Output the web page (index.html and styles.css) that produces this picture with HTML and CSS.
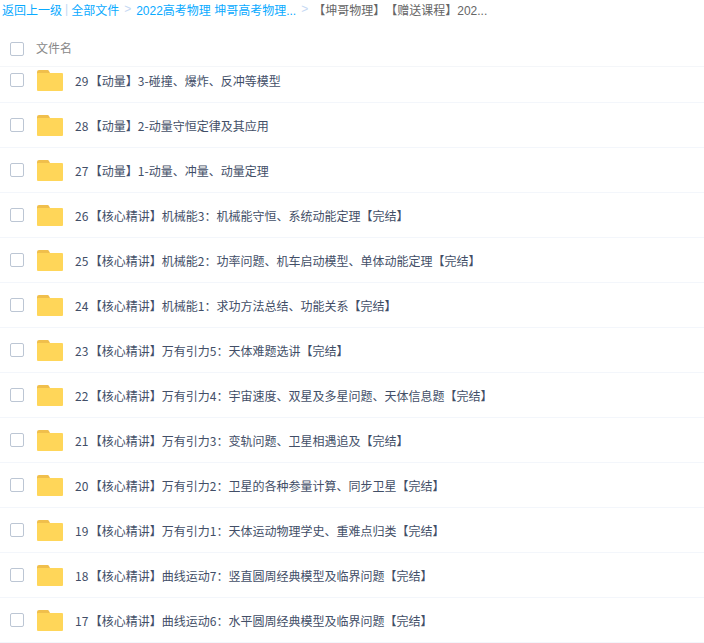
FILE: index.html
```html
<!DOCTYPE html>
<html lang="zh">
<head>
<meta charset="utf-8">
<title>文件列表</title>
<link rel="stylesheet" href="styles.css">
</head>
<body>
<svg class="sprite" width="0" height="0" aria-hidden="true">
  <symbol id="folder" viewBox="0 0 26 21">
    <path d="M0 2a2 2 0 0 1 2-2h8a2 2 0 0 1 2 1l1 2v4H0z" fill="#f0bf4c"/>
    <path d="M0 4a1 1 0 0 1 1-1h24a1 1 0 0 1 1 1v16a1 1 0 0 1-1 1H1a1 1 0 0 1-1-1z" fill="#ffd659"/>
  </symbol>
</svg>
<nav class="crumbs">
  <a>返回上一级</a><span class="pipe">|</span><a>全部文件</a><span class="gt">&gt;</span><a>2022高考物理 坤哥高考物理...</a><span class="gt">&gt;</span><span class="current">【坤哥物理】【赠送课程】202...</span>
</nav>
<div class="head">
  <span class="check"></span>
  <span class="head-label">文件名</span>
</div>
<div class="viewport">
  <ul class="list">
    <li class="row"><span class="check"></span><svg class="folder"><use href="#folder"/></svg><span class="name"><span class="num">29</span>【动量】3-碰撞、爆炸、反冲等模型</span></li>
    <li class="row"><span class="check"></span><svg class="folder"><use href="#folder"/></svg><span class="name"><span class="num">28</span>【动量】2-动量守恒定律及其应用</span></li>
    <li class="row"><span class="check"></span><svg class="folder"><use href="#folder"/></svg><span class="name"><span class="num">27</span>【动量】1-动量、冲量、动量定理</span></li>
    <li class="row"><span class="check"></span><svg class="folder"><use href="#folder"/></svg><span class="name"><span class="num">26</span>【核心精讲】机械能3：机械能守恒、系统动能定理【完结】</span></li>
    <li class="row"><span class="check"></span><svg class="folder"><use href="#folder"/></svg><span class="name"><span class="num">25</span>【核心精讲】机械能2：功率问题、机车启动模型、单体动能定理【完结】</span></li>
    <li class="row"><span class="check"></span><svg class="folder"><use href="#folder"/></svg><span class="name"><span class="num">24</span>【核心精讲】机械能1：求功方法总结、功能关系【完结】</span></li>
    <li class="row"><span class="check"></span><svg class="folder"><use href="#folder"/></svg><span class="name"><span class="num">23</span>【核心精讲】万有引力5：天体难题选讲【完结】</span></li>
    <li class="row"><span class="check"></span><svg class="folder"><use href="#folder"/></svg><span class="name"><span class="num">22</span>【核心精讲】万有引力4：宇宙速度、双星及多星问题、天体信息题【完结】</span></li>
    <li class="row"><span class="check"></span><svg class="folder"><use href="#folder"/></svg><span class="name"><span class="num">21</span>【核心精讲】万有引力3：变轨问题、卫星相遇追及【完结】</span></li>
    <li class="row"><span class="check"></span><svg class="folder"><use href="#folder"/></svg><span class="name"><span class="num">20</span>【核心精讲】万有引力2：卫星的各种参量计算、同步卫星【完结】</span></li>
    <li class="row"><span class="check"></span><svg class="folder"><use href="#folder"/></svg><span class="name"><span class="num">19</span>【核心精讲】万有引力1：天体运动物理学史、重难点归类【完结】</span></li>
    <li class="row"><span class="check"></span><svg class="folder"><use href="#folder"/></svg><span class="name"><span class="num">18</span>【核心精讲】曲线运动7：竖直圆周经典模型及临界问题【完结】</span></li>
    <li class="row"><span class="check"></span><svg class="folder"><use href="#folder"/></svg><span class="name"><span class="num">17</span>【核心精讲】曲线运动6：水平圆周经典模型及临界问题【完结】</span></li>
  </ul>
</div>
</body>
</html>
```
FILE: styles.css
```css
html, body {
  margin: 0;
  padding: 0;
  height: 643px;
  overflow: hidden;
  background: #fff;
  font-family: "Noto Sans CJK SC", "Liberation Sans", sans-serif;
  font-size: 12px;
  text-spacing-trim: space-all;
}
.sprite { position: absolute; }
.crumbs {
  display: flex;
  align-items: center;
  height: 18px;
  padding-left: 2px;
  white-space: nowrap;
  font-family: "Liberation Sans", "Noto Sans CJK SC", sans-serif;
  color: #666;
}
.crumbs a { color: #09aaff; }
.pipe { color: #c5d8f3; margin: 0 3px; }
.gt { color: #c5d8f3; margin: 0 5px; }
.current { color: #666; }
.head {
  display: flex;
  align-items: center;
  height: 49px;
  box-sizing: border-box;
  padding: 14px 0 0 10px;
  border-bottom: 1px solid #f4f6f9;
}
.head-label { color: #888; margin: 0 0 3px 12px; }
.check {
  flex: none;
  width: 14px;
  height: 14px;
  box-sizing: border-box;
  border: 1px solid #bcc6d4;
  border-radius: 2px;
  background: #fff;
}
.viewport { height: 576px; overflow: hidden; }
.list { list-style: none; margin: -9px 0 0; padding: 0; }
.row {
  display: flex;
  align-items: center;
  height: 45px;
  box-sizing: border-box;
  padding-left: 10px;
  border-bottom: 1px solid #f3f6fb;
}
.folder { flex: none; width: 26px; height: 21px; margin-left: 13px; }
.name { margin-left: 12px; color: #424e67; white-space: nowrap; }
.num { margin-right: 1.5px; }
```
